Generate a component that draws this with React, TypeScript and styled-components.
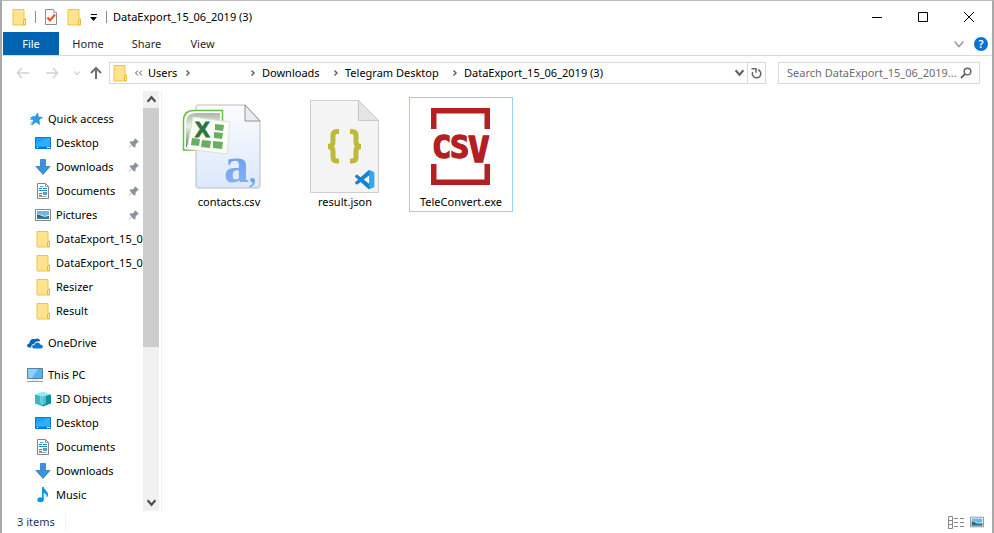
import React from "react";
import styled, { createGlobalStyle } from "styled-components";

const GlobalStyle = createGlobalStyle`
  * { box-sizing: border-box; }
  html, body, #root { height: 100%; }
  body {
    margin: 0;
    background: #fff;
    color: #000;
    font-family: "Noto Sans", "Open Sans", sans-serif;
    font-size: 11px;
    line-height: 16px;
  }
  button, input {
    margin: 0;
    padding: 0;
    border: 0;
    background: transparent;
    color: inherit;
    font: inherit;
  }
  svg { display: block; flex: none; }
`;

const Window = styled.div`
  display: flex;
  flex-direction: column;
  height: 100vh;
  border: solid #a9a9a9;
  border-width: 1px 2px 0 2px;
  border-top-color: #bcbcbc;
`;

const TitleBar = styled.header`
  display: flex;
  align-items: center;
  height: 31px;
  flex: none;
  padding-left: 9px;
`;

const QuickTools = styled.div`
  display: flex;
  align-items: center;
  gap: 8px;
`;

const Divider = styled.span`
  width: 1px;
  height: 12px;
  background: #8c8c8c;
`;

const IconButton = styled.button<{ $width?: number; $color?: string }>`
  display: flex;
  align-items: center;
  justify-content: center;
  flex: none;
  width: ${(p) => p.$width ?? 14}px;
  height: 100%;
  color: ${(p) => p.$color ?? "#000"};
`;

const WindowTitle = styled.h1`
  margin: 0 0 0 6px;
  flex: 1;
  font-size: 11px;
  font-weight: 400;
  white-space: nowrap;
`;

const Tabs = styled.nav`
  display: flex;
  flex: none;
  height: 24px;
  padding-left: 1px;
  border-bottom: 1px solid #dadbdc;
`;

const Tab = styled.button<{ $active?: boolean; $width: number }>`
  width: ${(p) => p.$width}px;
  height: 23px;
  background: ${(p) => (p.$active ? "#0063b1" : "transparent")};
  color: ${(p) => (p.$active ? "#fff" : "#262626")};
`;

const Spacer = styled.span`
  flex: 1;
`;

const AddressRow = styled.div`
  display: flex;
  align-items: center;
  flex: none;
  height: 34px;
  padding: 0 12px 1px 10px;
`;

const AddressBox = styled.div`
  display: flex;
  align-items: center;
  flex: 1;
  min-width: 0;
  height: 22px;
  margin-right: 12px;
  padding-left: 2px;
  border: 1px solid #d9d9d9;
`;

const Crumb = styled.button<{ $width: number }>`
  flex: none;
  width: ${(p) => p.$width}px;
  text-align: left;
  white-space: nowrap;
`;

const RefreshCell = styled.span`
  display: flex;
  height: 20px;
  border-left: 1px solid #d9d9d9;
`;

const SearchBox = styled.form`
  display: flex;
  align-items: center;
  flex: none;
  width: 202px;
  height: 22px;
  padding: 0 5px 0 8px;
  border: 1px solid #d9d9d9;
`;

const SearchInput = styled.input`
  flex: 1;
  min-width: 0;
  outline: 0;
  &::placeholder { color: #6d6d6d; opacity: 1; }
`;

const Body = styled.div`
  display: flex;
  flex: 1;
  min-height: 0;
  padding-top: 1px;
`;

const Sidebar = styled.aside`
  display: flex;
  flex: none;
  width: 160px;
  border-right: 1px solid #f0f0f0;
  padding-right: 2px;
`;

const Tree = styled.ul`
  flex: 1;
  min-width: 0;
  margin: 0;
  padding: 16px 0 0;
  overflow: hidden;
  list-style: none;
`;

const TreeItem = styled.li<{ $root?: boolean; $gap?: boolean }>`
  margin-top: ${(p) => (p.$gap ? 8 : 0)}px;
  padding-left: ${(p) => (p.$root ? 25 : 33)}px;
`;

const TreeButton = styled.button`
  display: flex;
  align-items: center;
  gap: 5px;
  width: 100%;
  height: 24px;
  text-align: left;
`;

const TreeLabel = styled.span`
  flex: 1;
  min-width: 0;
  overflow: hidden;
  white-space: nowrap;
`;

const PinSlot = styled.span`
  flex: none;
  width: 15px;
`;

const ScrollTrack = styled.div`
  display: flex;
  flex-direction: column;
  flex: none;
  width: 16px;
  background: #f0f0f0;
`;

const ScrollArrow = styled.button`
  display: flex;
  align-items: center;
  justify-content: center;
  flex: none;
  height: 17px;
`;

const ScrollThumb = styled.div`
  height: 62%;
  background: #cdcdcd;
`;

const ScrollRoom = styled.div`
  flex: 1;
  min-height: 0;
`;

const Files = styled.main`
  display: flex;
  flex: 1;
  flex-wrap: wrap;
  align-content: flex-start;
  gap: 12px;
  padding: 6px 15px;
`;

const FileTile = styled.button<{ $focused?: boolean }>`
  display: flex;
  flex-direction: column;
  align-items: center;
  width: 104px;
  height: 115px;
  border: 1px solid ${(p) => (p.$focused ? "#99d1ff" : "transparent")};
`;

const StatusBar = styled.footer`
  display: flex;
  align-items: center;
  flex: none;
  height: 22px;
  padding: 0 4px 0 15px;
  color: #1e395b;
`;

const Count = styled.span`
  padding-right: 10px;
  border-right: 1px solid #f0f0f0;
`;

const Folder = () => (
  <svg width="16" height="18" viewBox="0 0 16 18">
    <path d="M2 1.500h11V11h1.500v6H2z" fill="#ffe38d" stroke="#ecc54b" />
    <path d="M12.500 16.500V12l2-1v5.500z" fill="#ffeaa8" stroke="#e5b93c" />
  </svg>
);

const CheckedPage = () => (
  <svg width="14" height="18" viewBox="0 0 14 18">
    <path d="M1.500 1.500h8l3 3v12h-11z" fill="#fafafa" stroke="#8d8d8d" />
    <path d="M9.500 1.500v3h3" fill="#fff" stroke="#aaa" />
    <path d="M3.500 9.500l2.500 3 5-6" fill="none" stroke="#e8501e" strokeWidth="2" />
  </svg>
);

type ChevronProps = { dir: "up" | "down" | "right"; size?: number; color?: string; weight?: number };

const Chevron = ({ dir, size = 8, color = "#666", weight = 1.5 }: ChevronProps) => (
  <svg width={size} height={size} viewBox="0 0 8 8" fill="none" stroke={color} strokeWidth={weight}>
    <path d={dir === "up" ? "M.500 6 4 2l3.500 4" : dir === "down" ? "M.500 2 4 6l3.500-4" : "M2.500 1.500 5 4 2.500 6.500"} />
  </svg>
);

const Arrow = ({ dir, color }: { dir: "left" | "right" | "up"; color: string }) => (
  <svg width="14" height="14" viewBox="0 0 14 14" fill="none" stroke={color} strokeWidth={dir === "up" ? 2 : 1.5}>
    <path d={dir === "left" ? "M13 7H1.500M6 2 1.500 7 6 12" : dir === "right" ? "M1 7h11.500M8 2l4.500 5L8 12" : "M7 13V2M2 7l5-5 5 5"} />
  </svg>
);

const Pin = () => (
  <svg width="12" height="12" viewBox="0 0 12 12">
    <path d="M7 1l4 4-1.500.500-2 2 .200 2.500L6 10.500 3.800 8 1 11l-.200-.500L3.500 7.500 1.500 5.500 2.500 4.200l2.200.300 2-2z" fill="#8794a0" />
  </svg>
);

const StarIcon = () => (
  <svg width="16" height="16" viewBox="0 0 16 16">
    <path d="M10.500 2l.800 4 4.200.300-3.500 2.500.500 4.700-3.700-2.500L5 14l1.500-4.800L3.500 6.500l4.300-.300z" fill="#2d9ae8" stroke="#157fc9" strokeWidth=".6" />
    <path d="M5 5.500h3M3 8.500h3M4 11h2.500M3 13h2" stroke="#55b0ef" />
  </svg>
);

const DesktopIcon = () => (
  <svg width="16" height="16" viewBox="0 0 16 16">
    <path d="M.500 2.500h15v11H.500z" fill="#18a0fb" stroke="#0878d4" />
    <path d="M1 9 12 3h3v8H1z" fill="#44b4ff" opacity=".6" />
    <path d="M1 12h14v1H1z" fill="#0878d4" />
    <path d="M2 12.500h1m9 0h3" stroke="#fff" />
  </svg>
);

const DownloadIcon = () => (
  <svg width="16" height="16" viewBox="0 0 16 16">
    <path d="M5.500.500h5v7h4.500L8 15.500 1 7.500h4.500z" fill="#3b93de" stroke="#2d7cc4" strokeWidth=".8" />
  </svg>
);

const DocumentIcon = () => (
  <svg width="16" height="16" viewBox="0 0 16 16">
    <path d="M2.500.500h8l3 3v12h-11z" fill="#fff" stroke="#858585" />
    <path d="M10.500.500v3h3" fill="none" stroke="#999" />
    <path d="M4 5.500h3M8 5.500h4M4 7.500h8M4 10.500h3M4 12.500h3" stroke="#2088cf" />
    <path d="M5 3.500h3" stroke="#5ba7db" />
    <path d="M8 9h4v3H8z" fill="#58a2b0" />
    <path d="M4 13.500h8" stroke="#aaa" />
  </svg>
);

const PictureIcon = ({ small }: { small?: boolean }) => (
  <svg width={small ? 14 : 16} height={small ? 12 : 16} viewBox={small ? "0 2 16 12" : "0 0 16 16"}>
    <path d="M.500 2.500h15v11H.500z" fill="#fff" stroke="#858585" />
    <path d="M2 4h12v8H2z" fill="#69b6ee" />
    <path d="M2 7.500q4-1 7 1.500l5-1v2H2z" fill="#e7f3f1" />
    <path d="M2 7.500q3 0 5 1.500t7 0v3H2z" fill="#37645b" />
    <path d="M2 10.500h12V12H2z" fill="#2d7fb8" />
  </svg>
);

const CloudIcon = () => (
  <svg width="16" height="16" viewBox="0 0 16 16">
    <path d="M1.800 12.500C-.800 12-.200 8.500 2.300 8.500 2.500 5 5.200 3 8 4.300 10 2.600 13 3.500 13.300 6.500 10 5.800 8 7 7 9c-2.400.200-3 2-2.600 3.500z" fill="#0a64b8" />
    <path d="M6.800 13.500c-2.400-.200-2.400-3.500.700-3.700C8.500 6.800 12.500 6.800 13.300 9.500c3.300 0 3.200 3.800.700 4z" fill="#0b78d4" />
  </svg>
);

const PcIcon = () => (
  <svg width="16" height="16" viewBox="0 0 16 16">
    <path d="M.500 1.500h15v10H.500z" fill="#55b4ef" stroke="#5c7e98" />
    <path d="M1 2h10L5 11H1z" fill="#8ad0f8" />
    <path d="M0 14.500h16" stroke="#8ba0af" />
    <path d="M5 13h6" stroke="#cbd6de" />
  </svg>
);

const CubeIcon = () => (
  <svg width="16" height="16" viewBox="0 0 16 16">
    <path d="M0 3.500l8-3 8 3-8 2z" fill="#9be9f0" />
    <path d="M0 3.500l8 2v10l-8-3z" fill="#35b8c8" />
    <path d="M16 3.500l-8 2v10l8-3z" fill="#0d8ea3" />
    <path d="M5 5l6-1.500v9L8 14l-3-2z" fill="#8de4ee" opacity=".55" />
  </svg>
);

const MusicIcon = () => (
  <svg width="16" height="16" viewBox="0 0 16 16">
    <ellipse cx="5.500" cy="12.800" rx="3.200" ry="2.500" fill="#0a95ea" />
    <path d="M7 0h1.700c.500 3 4.300 4 4.300 7.500 0 1.500-.700 2.500-1.500 3.500.800-3-1-4.500-2.800-5v7H7z" fill="#0a95ea" />
  </svg>
);

const CsvIcon = () => (
  <svg width="96" height="96" viewBox="0 0 96 96">
    <defs>
      <linearGradient id="page" x1="0" y1="0" x2="0" y2="1">
        <stop offset="0" stopColor="#fbfcfe" />
        <stop offset="1" stopColor="#dce8fb" />
      </linearGradient>
      <linearGradient id="excel" x1="0" y1="0" x2="0" y2="1">
        <stop offset="0" stopColor="#a9b7a9" />
        <stop offset=".4" stopColor="#e9f0e5" />
        <stop offset="1" stopColor="#4f8d4c" />
      </linearGradient>
      <linearGradient id="letter" x1="0" y1="0" x2="0" y2="1">
        <stop offset="0" stopColor="#6590e6" />
        <stop offset="1" stopColor="#8ab8f8" />
      </linearGradient>
    </defs>
    <path d="M17 7h47l15 16v65q0 2-2 2H17q-2 0-2-2V9q0-2 2-2z" fill="url(#page)" stroke="#b9bcc1" />
    <path d="M64 7l15 16H64z" fill="#e8edf3" stroke="#777c82" strokeWidth=".8" />
    <text x="43" y="84" fontFamily="Liberation Serif" fontWeight="700" fontSize="50" fill="url(#letter)">a</text>
    <text x="67" y="84" fontFamily="Liberation Serif" fontSize="36" fill="#6fa0f0">,</text>
    <path d="M13 12.500h28.500V52H2.500V23q0-10.500 10.500-10.500z" fill="#fff" stroke="#64bd45" strokeWidth="1.500" />
    <path d="M15 15h24v34H5V25q0-10 10-10z" fill="url(#excel)" />
    <path d="M12 19l37 5-3 32-40-5z" fill="#fbfdf7" stroke="#dce3d5" />
    <path d="M34 26l9 1-1 6-8-1zM33 34l9 1-1 6-8-1zM32 43l10 1-1 7-9-1zM21 42l9 1-1 7-9-1zM11 40l8 1-1 7-8-1z" fill="#6bad63" />
    <text x="14" y="39" fontFamily="Liberation Sans" fontWeight="700" fontSize="22" fill="#2e7537" stroke="#2e7537">X</text>
  </svg>
);

const JsonIcon = () => (
  <svg width="96" height="96" viewBox="0 0 96 96">
    <path d="M13.500 2.500h48l20 20v72h-68z" fill="#f4f4f4" stroke="#cfcfcf" />
    <path d="M61.500 2.500v20h20z" fill="#e4e4e4" stroke="#c8c8c8" />
    <g fill="none" stroke="#bcb93b" strokeWidth="5">
      <path d="M42 33.500h-2q-4 0-4 4V44q0 4.500-5 4.500 5 0 5 4.500v6q0 4 4 4h2" />
      <path d="M53 33.500h2q4 0 4 4V44q0 4.500 5 4.500-5 0-5 4.500v6q0 4-4 4h-2" />
    </g>
    <g transform="translate(58 72) scale(.8)">
      <path
        fill="#1583cf"
        d="M23.150 2.587L18.210.210a1.494 1.494 0 0 0-1.705.290l-9.460 8.630-4.120-3.128a.999.999 0 0 0-1.276.057L.327 7.261A1 1 0 0 0 .326 8.740L3.899 12 .326 15.260a1 1 0 0 0 .001 1.479L1.650 17.940a.999.999 0 0 0 1.276.057l4.120-3.128 9.460 8.630a1.492 1.492 0 0 0 1.704.290l4.942-2.377A1.500 1.500 0 0 0 24 20.060V3.939a1.500 1.500 0 0 0-.850-1.352zm-5.146 14.861L10.826 12l7.178-5.448v10.896z"
      />
      <path d="M18 .200l5.150 2.387q.850.500.850 1.352V20.060q0 .900-.850 1.352L18 23.800z" fill="#31a9ef" />
    </g>
  </svg>
);

const ExeIcon = () => (
  <svg width="96" height="96" viewBox="0 0 96 96" fill="#b22024">
    <path d="M18 10h59v21h-5.500V15.500h-48V31H18zM18 66h5.500v15.500h48V66H77v21H18z" />
    <g fontFamily="DejaVu Sans Mono" fontWeight="700" fontSize="32" stroke="#b22024" strokeWidth="1.500">
      <text x="19" y="60">C</text>
      <text x="37" y="60">S</text>
      <text x="55" y="64" fontSize="36">V</text>
    </g>
  </svg>
);

type Entry = { label: string; icon: React.ReactNode; root?: boolean; gap?: boolean; pinned?: boolean };

const entries: Entry[] = [
  { label: "Quick access", icon: <StarIcon />, root: true },
  { label: "Desktop", icon: <DesktopIcon />, pinned: true },
  { label: "Downloads", icon: <DownloadIcon />, pinned: true },
  { label: "Documents", icon: <DocumentIcon />, pinned: true },
  { label: "Pictures", icon: <PictureIcon />, pinned: true },
  { label: "DataExport_15_06", icon: <Folder /> },
  { label: "DataExport_15_06", icon: <Folder /> },
  { label: "Resizer", icon: <Folder /> },
  { label: "Result", icon: <Folder /> },
  { label: "OneDrive", icon: <CloudIcon />, root: true, gap: true },
  { label: "This PC", icon: <PcIcon />, root: true, gap: true },
  { label: "3D Objects", icon: <CubeIcon /> },
  { label: "Desktop", icon: <DesktopIcon /> },
  { label: "Documents", icon: <DocumentIcon /> },
  { label: "Downloads", icon: <DownloadIcon /> },
  { label: "Music", icon: <MusicIcon /> },
];

const crumbs = [
  { label: "Users", width: 34 },
  { label: "", width: 50 },
  { label: "Downloads", width: 65 },
  { label: "Telegram Desktop", width: 101 },
  { label: "DataExport_15_06_2019 (3)", width: 150 },
];

const files = [
  { name: "contacts.csv", icon: <CsvIcon /> },
  { name: "result.json", icon: <JsonIcon /> },
  { name: "TeleConvert.exe", icon: <ExeIcon />, focused: true },
];

export default function App() {
  return (
    <>
      <GlobalStyle />
      <Window>
        <TitleBar>
          <QuickTools>
            <Folder />
            <Divider />
            <IconButton aria-label="Properties"><CheckedPage /></IconButton>
            <IconButton aria-label="New folder" $width={16}><Folder /></IconButton>
            <IconButton aria-label="Customize toolbar" $width={8}>
              <svg width="8" height="8" viewBox="0 0 8 8"><path d="M1 1h6v1H1zM0 4h7L3.500 8z" /></svg>
            </IconButton>
            <Divider />
          </QuickTools>
          <WindowTitle>DataExport_15_06_2019 (3)</WindowTitle>
          <IconButton aria-label="Minimize" $width={46}>
            <svg width="10" height="10" stroke="#000"><path d="M0 5.500h10" /></svg>
          </IconButton>
          <IconButton aria-label="Maximize" $width={45}>
            <svg width="10" height="10" stroke="#000" fill="none"><path d="M.500.500h9v9h-9z" /></svg>
          </IconButton>
          <IconButton aria-label="Close" $width={47}>
            <svg width="10" height="10" stroke="#000"><path d="M0 0l10 10M10 0 0 10" /></svg>
          </IconButton>
        </TitleBar>

        <Tabs>
          <Tab $active $width={56}>File</Tab>
          <Tab $width={58}>Home</Tab>
          <Tab $width={59}>Share</Tab>
          <Tab $width={53}>View</Tab>
          <Spacer />
          <IconButton aria-label="Expand ribbon" $width={22}><Chevron dir="down" size={10} color="#999" weight={1.2} /></IconButton>
          <IconButton aria-label="Help" $width={22}>
            <svg width="14" height="14" viewBox="0 0 14 14">
              <circle cx="7" cy="7" r="7" fill="#0a73cf" />
              <text x="7" y="11" textAnchor="middle" fontFamily="Noto Sans" fontWeight="600" fontSize="11" fill="#fff">?</text>
            </svg>
          </IconButton>
        </Tabs>

        <AddressRow>
          <IconButton aria-label="Back" $width={21}><Arrow dir="left" color="#d2d2d2" /></IconButton>
          <IconButton aria-label="Forward" $width={37}><Arrow dir="right" color="#d2d2d2" /></IconButton>
          <IconButton aria-label="Recent locations" $width={13}><Chevron dir="down" size={6} color="#ccc" /></IconButton>
          <IconButton aria-label="Up" $width={26}><Arrow dir="up" color="#6e6e6e" /></IconButton>
          <AddressBox>
            <Folder />
            <IconButton aria-label="Earlier locations" $width={20}>
              <svg width="9" height="8" viewBox="0 0 9 8" fill="none" stroke="#555"><path d="M4 1.500 1.500 4 4 6.500M8 1.500 5.500 4 8 6.500" /></svg>
            </IconButton>
            {crumbs.map((c, i) => (
              <React.Fragment key={i}>
                <Crumb $width={c.width} aria-label={c.label || "User folder"}>{c.label}</Crumb>
                {i < crumbs.length - 1 && (
                  <IconButton aria-label="Show subfolders" $width={i === 0 ? 12 : 18}>
                    <Chevron dir="right" />
                  </IconButton>
                )}
              </React.Fragment>
            ))}
            <Spacer />
            <IconButton aria-label="Previous locations" $width={16}><Chevron dir="down" size={9} weight={2} /></IconButton>
            <RefreshCell>
              <IconButton aria-label="Refresh" $width={17}>
                <svg width="11" height="12" viewBox="0 0 11 12" fill="none" stroke="#666" strokeWidth="1.500">
                  <path d="M.500 1.700H5v4M7 2.700A4.200 4.200 0 1 1 1.700 5" />
                </svg>
              </IconButton>
            </RefreshCell>
          </AddressBox>
          <SearchBox>
            <SearchInput type="text" aria-label="Search" placeholder="Search DataExport_15_06_2019..." />
            <IconButton type="button" aria-label="Start search" $width={16}>
              <svg width="12" height="12" viewBox="0 0 12 12" fill="none" stroke="#666" strokeWidth="1.500">
                <circle cx="7.500" cy="4.500" r="3.300" />
                <path d="M5 7 1 11" strokeWidth="2" />
              </svg>
            </IconButton>
          </SearchBox>
        </AddressRow>

        <Body>
          <Sidebar>
            <Tree>
              {entries.map((e, i) => (
                <TreeItem key={i} $root={e.root} $gap={e.gap}>
                  <TreeButton>
                    {e.icon}
                    <TreeLabel>{e.label}</TreeLabel>
                    {e.pinned && <PinSlot><Pin /></PinSlot>}
                  </TreeButton>
                </TreeItem>
              ))}
            </Tree>
            <ScrollTrack>
              <ScrollArrow aria-label="Scroll up"><Chevron dir="up" size={9} color="#505050" weight={2} /></ScrollArrow>
              <ScrollRoom><ScrollThumb /></ScrollRoom>
              <ScrollArrow aria-label="Scroll down"><Chevron dir="down" size={9} color="#505050" weight={2} /></ScrollArrow>
            </ScrollTrack>
          </Sidebar>
          <Files>
            {files.map((f) => (
              <FileTile key={f.name} $focused={f.focused}>
                {f.icon}
                {f.name}
              </FileTile>
            ))}
          </Files>
        </Body>

        <StatusBar>
          <Count>3 items</Count>
          <Spacer />
          <IconButton aria-label="Details view" $width={20}>
            <svg width="16" height="13" viewBox="0 0 16 13" fill="none" stroke="#858585">
              <path d="M.500.500h4v12h-4zM.500 4.500h4M.500 8.500h4M6 2.500h4M12 2.500h4M6 6.500h4M12 6.500h4M6 10.500h4M12 10.500h4" />
            </svg>
          </IconButton>
          <IconButton aria-label="Large icons view" $width={22}><PictureIcon small /></IconButton>
        </StatusBar>
      </Window>
    </>
  );
}
